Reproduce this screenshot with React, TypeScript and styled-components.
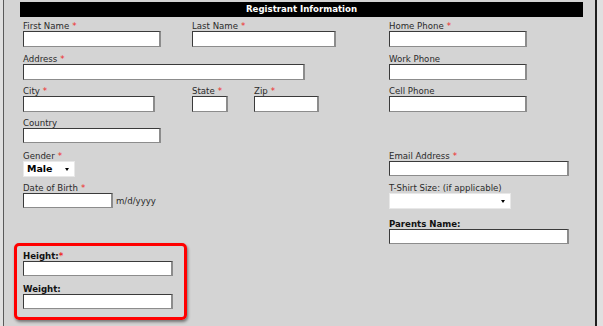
import styled, { createGlobalStyle } from 'styled-components'

const GlobalStyle = createGlobalStyle`
  html, body {
    margin: 0;
    padding: 0;
    background: #e0e0e0;
  }
  body {
    font-family: "DejaVu Sans", Verdana, sans-serif;
  }
`

// ==================== layout ====================

const Panel = styled.div`
  margin-left: 3px;
  width: 594px;
  height: 326px;
  box-sizing: border-box;
  background: #d4d4d4;
  border-left: 1px solid #5a5a5a;
  border-right: 2px solid #1e1e1e;
  padding-top: 2px;
  overflow: hidden;
`

const Header = styled.div`
  margin-left: 16px;
  width: 563px;
  height: 15px;
  background: #000;
  color: #fff;
  font-weight: bold;
  font-size: 8.6px;
  line-height: 15px;
  text-align: center;
`

const Form = styled.div`
  display: flex;
  margin-top: 4px;
  padding-left: 19px;
`

const Column = styled.div<{ $width?: number }>`
  display: flex;
  flex-direction: column;
  gap: 6px;
  width: ${p => (p.$width ? `${p.$width}px` : 'auto')};
`

const Row = styled.div<{ $h: number }>`
  display: flex;
  height: ${p => p.$h}px;
  align-items: flex-start;
`

const Field = styled.div<{ $w?: number }>`
  display: flex;
  flex-direction: column;
  width: ${p => (p.$w ? `${p.$w}px` : 'auto')};
  flex-shrink: 0;
`

const Label = styled.div<{ $bold?: boolean }>`
  font-size: 8.6px;
  line-height: 10px;
  height: 10px;
  white-space: nowrap;
  color: ${p => (p.$bold ? '#111' : '#2a2a2a')};
  font-weight: ${p => (p.$bold ? 'bold' : 'normal')};
`

const Req = styled.span<{ $tight?: boolean }>`
  color: #ee2a2a;
  margin-left: ${p => (p.$tight ? '0' : '3px')};
`

const TextBox = styled.div<{ $w: number; $h?: number }>`
  width: ${p => p.$w}px;
  height: ${p => p.$h ?? 16}px;
  box-sizing: border-box;
  background: #fff;
  border-style: solid;
  border-width: 1px 2px 1px 1px;
  border-color: #3a3a3a #8c8c8c #8c8c8c #3a3a3a;
`

const Inline = styled.div`
  display: flex;
  align-items: center;
  gap: 3px;
`

const Hint = styled.span`
  font-size: 8.6px;
  color: #2a2a2a;
`

const SelectBox = styled.div<{ $w: number }>`
  position: relative;
  width: ${p => p.$w}px;
  height: 16px;
  box-sizing: border-box;
  background: #fff;
  border: 1px solid #e8e8e8;
  padding-left: 3px;
  font-size: 9.5px;
  font-weight: bold;
  line-height: 14px;
  color: #000;

  &::after {
    content: '';
    position: absolute;
    right: 5px;
    top: 6px;
    border-left: 2.5px solid transparent;
    border-right: 2.5px solid transparent;
    border-top: 3px solid #000;
  }
`

const Callout = styled.div`
  margin-top: 24px;
  margin-left: -9px;
  width: 173px;
  box-sizing: border-box;
  border: 3px solid #ff0000;
  border-radius: 5px;
  box-shadow: 1px 2px 3px rgba(0, 0, 0, 0.45);
  padding: 5px 0 8px 6px;
  display: flex;
  flex-direction: column;
  gap: 8px;
`

// ==================== component ====================

export default function App() {
  return (
    <>
      <GlobalStyle />
      <Panel>
        <Header>Registrant Information</Header>
        <Form>
          <Column $width={366}>
            <Row $h={27}>
              <Field $w={169}>
                <Label>First Name<Req>*</Req></Label>
                <TextBox $w={138} />
              </Field>
              <Field>
                <Label>Last Name<Req>*</Req></Label>
                <TextBox $w={144} />
              </Field>
            </Row>
            <Row $h={26}>
              <Field>
                <Label>Address<Req>*</Req></Label>
                <TextBox $w={282} />
              </Field>
            </Row>
            <Row $h={26}>
              <Field $w={169}>
                <Label>City<Req>*</Req></Label>
                <TextBox $w={132} />
              </Field>
              <Field $w={62}>
                <Label>State<Req>*</Req></Label>
                <TextBox $w={36} />
              </Field>
              <Field>
                <Label>Zip<Req>*</Req></Label>
                <TextBox $w={65} />
              </Field>
            </Row>
            <Row $h={27}>
              <Field>
                <Label>Country</Label>
                <TextBox $w={138} $h={15} />
              </Field>
            </Row>
            <Row $h={26}>
              <Field>
                <Label>Gender<Req>*</Req></Label>
                <SelectBox $w={52}>Male</SelectBox>
              </Field>
            </Row>
            <Row $h={30}>
              <Field>
                <Label>Date of Birth<Req>*</Req></Label>
                <Inline>
                  <TextBox $w={90} $h={15} />
                  <Hint>m/d/yyyy</Hint>
                </Inline>
              </Field>
            </Row>
            <Callout>
              <Field>
                <Label $bold>Height:<Req $tight>*</Req></Label>
                <TextBox $w={150} $h={15} />
              </Field>
              <Field>
                <Label $bold>Weight:</Label>
                <TextBox $w={150} $h={15} />
              </Field>
            </Callout>
          </Column>
          <Column>
            <Row $h={27}>
              <Field>
                <Label>Home Phone<Req>*</Req></Label>
                <TextBox $w={138} />
              </Field>
            </Row>
            <Row $h={26}>
              <Field>
                <Label>Work Phone</Label>
                <TextBox $w={138} />
              </Field>
            </Row>
            <Row $h={26}>
              <Field>
                <Label>Cell Phone</Label>
                <TextBox $w={138} />
              </Field>
            </Row>
            <Row $h={27} />
            <Row $h={26}>
              <Field>
                <Label>Email Address<Req>*</Req></Label>
                <TextBox $w={180} $h={15} />
              </Field>
            </Row>
            <Row $h={30}>
              <Field>
                <Label>T-Shirt Size: (if applicable)</Label>
                <SelectBox $w={122} />
              </Field>
            </Row>
            <Row $h={26}>
              <Field>
                <Label $bold>Parents Name:</Label>
                <TextBox $w={180} $h={15} />
              </Field>
            </Row>
          </Column>
        </Form>
      </Panel>
    </>
  )
}
